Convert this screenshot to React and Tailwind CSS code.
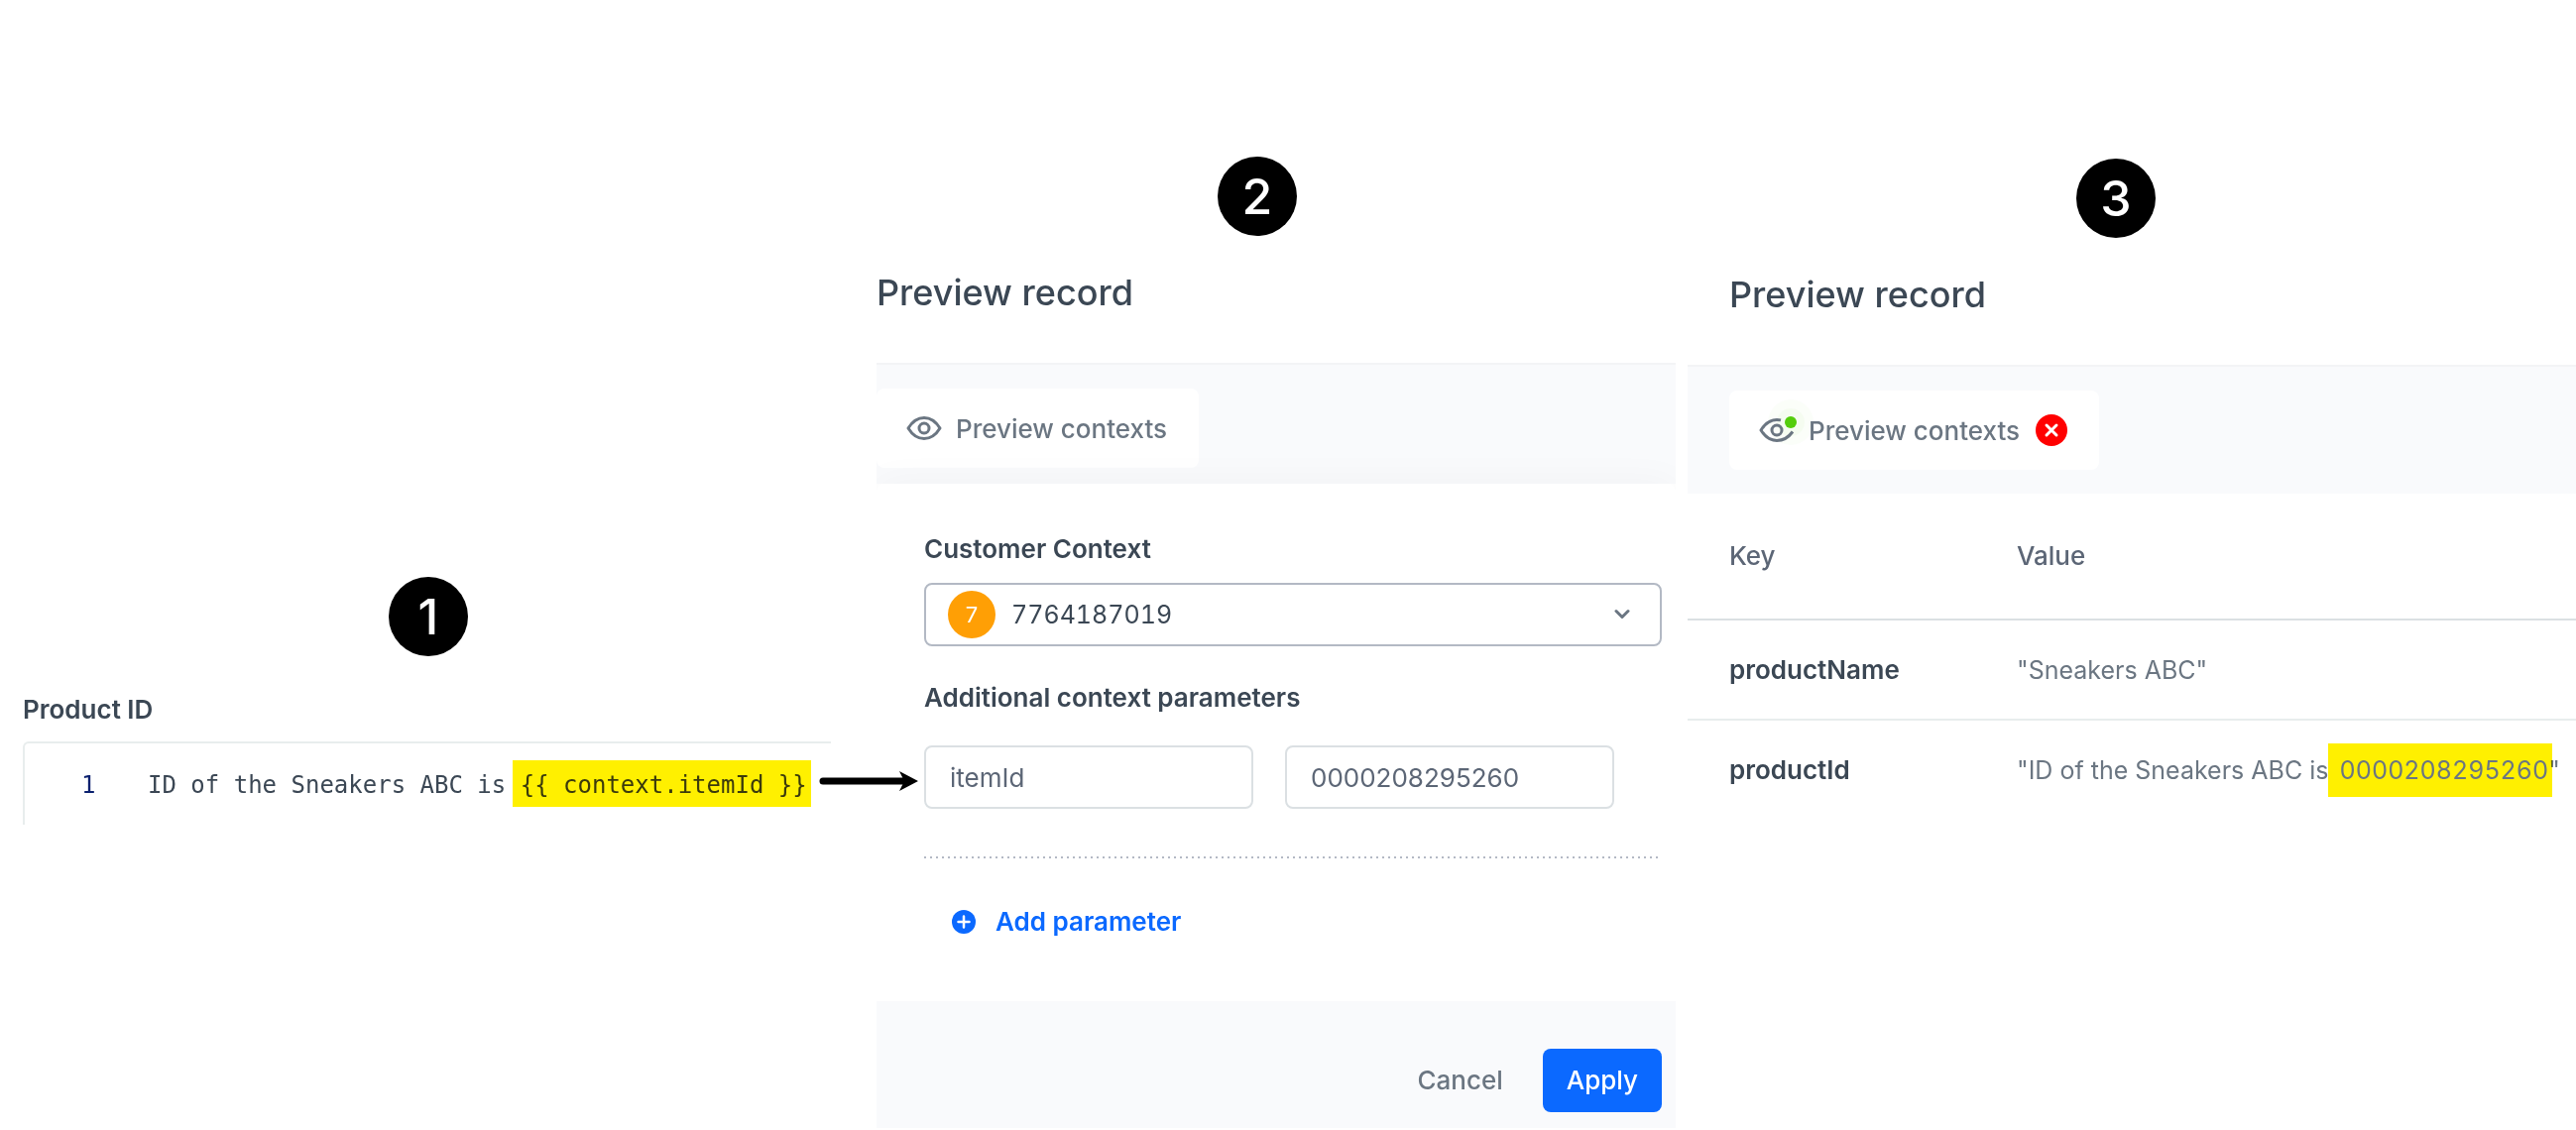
import { useState } from "react";

const rows = [
  { key: "productName", value: '"Sneakers ABC"' },
  { key: "productId", value: '"ID of the Sneakers ABC is ', marked: "0000208295260", tail: '"' },
];

export default function App() {
  return (
    <main className="grid grid-cols-[884fr_806fr_908fr] min-h-[1140px] bg-white font-['Inter','Liberation_Sans',sans-serif] text-[26px] leading-8 text-[#3b4754]">
      <EditorPanel />
      <ContextPanel />
      <RecordPanel />
    </main>
  );
}

function Step({ children }) {
  return (
    <div className="flex size-20 items-center justify-center rounded-full bg-black text-[50px] leading-none font-medium text-white">
      {children}
    </div>
  );
}

function EditorPanel() {
  return (
    <section className="pl-[23px] pt-[582px]">
      <div className="pl-[369px]">
        <Step>1</Step>
      </div>
      <h2 className="mt-[38px] font-semibold">Product ID</h2>
      <div className="relative mt-4 mr-[46px] flex h-[84px] items-start rounded-tl-md border-t-2 border-l-2 border-[#e8eded] pt-[17px] font-['DejaVu_Sans_Mono',monospace] text-2xl leading-[43px]">
        <span className="w-[124px] shrink-0 pt-1 pl-[57px] text-[#0b216f]">1</span>
        <code className="font-['DejaVu_Sans_Mono',monospace] whitespace-pre">
          ID of the Sneakers ABC is{" "}
          <mark className="-ml-2 inline-block bg-[#fff000] pt-1 pr-1 pl-2 text-[#3b3a0c]">{"{{ context.itemId }}"}</mark>
        </code>
        <Arrow />
      </div>
    </section>
  );
}

function Arrow() {
  return (
    <svg className="absolute top-[26px] -right-[90px] z-10" width="102" height="24" viewBox="0 0 102 24" aria-hidden="true">
      <path d="M4 12H86" stroke="#000" strokeWidth="7" strokeLinecap="round" />
      <path d="M81 2L100 12L81 22L86 12Z" fill="#000" />
    </svg>
  );
}

function ContextPanel() {
  const [param, setParam] = useState("itemId");
  const [value, setValue] = useState("0000208295260");

  return (
    <section className="overflow-hidden pt-[158px]">
      <div className="pl-[344px]">
        <Step>2</Step>
      </div>
      <h2 className="mt-[35px] text-4xl leading-[44px] font-medium">Preview record</h2>
      <div className="mt-[49px] h-[122px] border-t-2 border-[#f3f4f6] bg-[#f9fafc] pt-6">
        <button className="flex h-20 items-center rounded-lg bg-white pr-8 pl-[30px] font-medium text-[#6b7682]">
          <Eye />
          <span className="ml-[14px] pt-0.5">Preview contexts</span>
        </button>
      </div>

      <div className="rounded-t-lg bg-white pt-[50px] pr-[14px] pb-16 pl-12 shadow-[0_0_40px_rgba(0,0,0,0.04)]">
        <label htmlFor="customer" className="block font-semibold">Customer Context</label>
        <div className="relative mt-[18px]">
          <select
            id="customer"
            className="h-16 w-full appearance-none rounded-lg border-2 border-[#b3b9c4] bg-white pl-[86px] text-[25px] text-[#3b4754] tabular-nums"
          >
            <option>7764187019</option>
          </select>
          <span className="pointer-events-none absolute top-2 left-6 flex size-12 items-center justify-center rounded-full bg-[#ff9f05] text-[22px] text-white">
            7
          </span>
          <svg className="pointer-events-none absolute top-[26px] right-8" width="16" height="12" viewBox="0 0 16 12" fill="none">
            <path d="M2 2.500L8 8.500L14 2.500" stroke="#6b7682" strokeWidth="3" strokeLinecap="round" strokeLinejoin="round" />
          </svg>
        </div>

        <h3 className="mt-9 font-semibold">Additional context parameters</h3>
        <div className="mt-8 mr-12 grid grid-cols-2 gap-8 text-[#5c6676]">
          <input
            aria-label="Parameter name"
            value={param}
            onChange={(e) => setParam(e.target.value)}
            className="h-16 w-full rounded-lg border-2 border-[#dbe0e3] px-6"
          />
          <input
            aria-label="Parameter value"
            value={value}
            onChange={(e) => setValue(e.target.value)}
            className="h-16 w-full rounded-lg border-2 border-[#dbe0e3] px-6"
          />
        </div>

        <div className="mt-12 h-[2px] bg-[repeating-linear-gradient(90deg,#b3b9c4_0_2px,transparent_2px_6px)]" />
        <button className="mt-12 ml-7 flex items-center gap-5 font-semibold text-[#0b69ff]">
          <svg width="24" height="24" viewBox="0 0 24 24">
            <circle cx="12" cy="12" r="12" fill="#0b69ff" />
            <path d="M12 6.500V17.500M6.500 12H17.500" stroke="#fff" strokeWidth="2.500" strokeLinecap="round" />
          </svg>
          Add parameter
        </button>
      </div>

      <footer className="flex h-32 items-end justify-end gap-10 bg-[#f9fafc] pr-[14px] pb-4 font-medium">
        <button className="h-16 text-[#6b7682]">Cancel</button>
        <button className="h-16 rounded-lg bg-[#0b69ff] px-6 text-white">Apply</button>
      </footer>
    </section>
  );
}

function RecordPanel() {
  return (
    <section className="pt-40 pl-3">
      <div className="pl-[392px]">
        <Step>3</Step>
      </div>
      <h2 className="mt-[35px] pl-[42px] text-4xl leading-[44px] font-medium">Preview record</h2>
      <div className="mt-[49px] h-[130px] border-t-2 border-[#f3f4f6] bg-[#f9fafc] pt-6 pl-[42px]">
        <button className="flex h-20 items-center rounded-lg bg-white pr-8 pl-[30px] font-medium text-[#6b7682]">
          <ActiveEye />
          <span className="ml-[14px] pt-0.5">Preview contexts</span>
          <svg className="ml-4" width="32" height="32" viewBox="0 0 32 32">
            <circle cx="16" cy="16" r="16" fill="#f00" />
            <path d="M11 11L21 21M21 11L11 21" stroke="#fff" strokeWidth="3" strokeLinecap="round" />
          </svg>
        </button>
      </div>

      <table className="w-full table-fixed text-left">
        <thead>
          <tr className="h-[127px] border-b-2 border-[#dbe0e3] text-[#5c6676]">
            <th className="w-[332px] pl-[42px] font-medium">Key</th>
            <th className="font-medium">Value</th>
          </tr>
        </thead>
        <tbody>
          {rows.map((row) => (
            <tr key={row.key} className="h-[101px] border-b-2 border-[#e8eded] last:border-b-0">
              <th className="pl-[42px] font-semibold">{row.key}</th>
              <td className="text-[25px] whitespace-nowrap text-[#6b7682]">
                {row.value}
                {row.marked && (
                  <mark className="-mr-1 -ml-2 inline-block bg-[#fff000] py-[11px] pr-1 pl-3 text-[#6b7682] tabular-nums mix-blend-multiply">
                    {row.marked}
                  </mark>
                )}
                {row.tail}
              </td>
            </tr>
          ))}
        </tbody>
      </table>
    </section>
  );
}

function Eye() {
  return (
    <svg width="36" height="24" viewBox="0 0 36 24" fill="none" stroke="#6b7682" strokeWidth="3">
      <path d="M2 12C6 5.500 11.500 1.500 18 1.500S30 5.500 34 12C30 18.500 24.500 22.500 18 22.500S6 18.500 2 12Z" strokeLinejoin="round" />
      <circle cx="18" cy="12" r="5" />
    </svg>
  );
}

function ActiveEye() {
  return (
    <svg className="overflow-visible" width="36" height="24" viewBox="0 0 36 24" fill="none" stroke="#6b7682" strokeWidth="3">
      <circle cx="32" cy="4" r="23" fill="#54cd0b" fillOpacity="0.025" stroke="none" />
      <circle cx="32" cy="4" r="14" fill="#54cd0b" fillOpacity="0.035" stroke="none" />
      <path d="M22 1.900C20.700 1.600 19.400 1.500 18 1.500C11.500 1.500 6 5.500 2 12C6 18.500 11.500 22.500 18 22.500C24.500 22.500 30 19 34 13.500" strokeLinejoin="round" />
      <circle cx="18" cy="12" r="5" />
      <circle cx="32" cy="4" r="6" fill="#54cd0b" stroke="none" />
    </svg>
  );
}
